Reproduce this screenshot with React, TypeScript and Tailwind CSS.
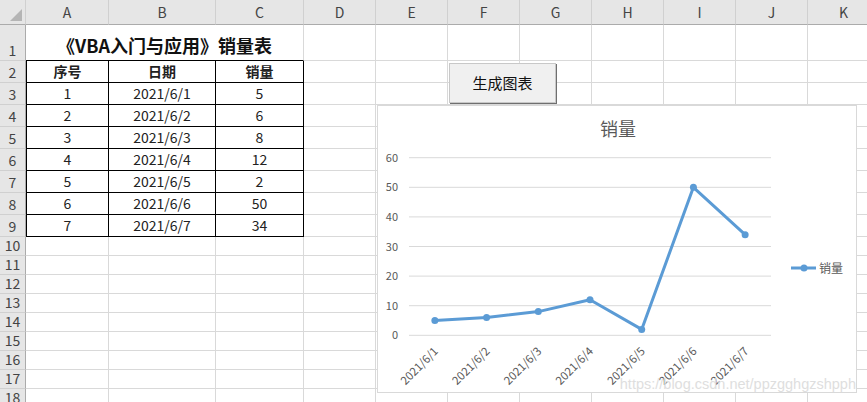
import React from 'react';

const COLS = [
  { key: 'A', w: 'w-[83px]' },
  { key: 'B', w: 'w-[107px]' },
  { key: 'C', w: 'w-[88px]' },
  { key: 'D', w: 'w-[72px]' },
  { key: 'E', w: 'w-[72px]' },
  { key: 'F', w: 'w-[72px]' },
  { key: 'G', w: 'w-[72px]' },
  { key: 'H', w: 'w-[72px]' },
  { key: 'I', w: 'w-[72px]' },
  { key: 'J', w: 'w-[72px]' },
  { key: 'K', w: 'w-[72px]' },
];

const DATA: [number, string, number][] = [
  [1, '2021/6/1', 5],
  [2, '2021/6/2', 6],
  [3, '2021/6/3', 8],
  [4, '2021/6/4', 12],
  [5, '2021/6/5', 2],
  [6, '2021/6/6', 50],
  [7, '2021/6/7', 34],
];

function RowHead({ n, h }: { n: number; h: string }) {
  return (
    <div
      className={`${h} w-[26px] shrink-0 flex items-end justify-center bg-[#e6e6e6] border-r border-b border-r-[#ababab] border-b-[#d0d0d0] text-[14px] leading-[19px] text-[#444]`}
    >
      {n}
    </div>
  );
}

function EmptyCells({ from, h }: { from: number; h: string }) {
  return (
    <>
      {COLS.slice(from).map((c) => (
        <div
          key={c.key}
          className={`${h} ${c.w} shrink-0 border-r border-b border-[#d9d9d9]`}
        />
      ))}
    </>
  );
}

function TableRow({ n, cells, bold }: { n: number; cells: (string | number)[]; bold?: boolean }) {
  return (
    <div className="flex">
      <RowHead n={n} h="h-[22px]" />
      {cells.map((v, i) => (
        <div
          key={i}
          className={`h-[22px] ${COLS[i].w} shrink-0 flex items-center justify-center border-r border-b border-black text-[14px] text-[#222] ${
            i === 0 ? 'border-l' : ''
          } ${bold ? 'font-bold' : ''}`}
        >
          {v}
        </div>
      ))}
      <EmptyCells from={3} h="h-[22px]" />
    </div>
  );
}

function Chart() {
  const left = 31;
  const right = 393;
  const zeroY = 229.3;
  const step = 29.6;
  const band = (right - left) / 7;
  const pts = DATA.map((d, i) => ({
    x: left + band / 2 + i * band,
    y: zeroY - (d[2] / 10) * step,
    label: d[1],
  }));
  const path = pts.map((p, i) => `${i ? 'L' : 'M'}${p.x.toFixed(1)} ${p.y.toFixed(1)}`).join(' ');

  return (
    <div className="absolute left-[377px] top-[105px] w-[480px] h-[288px] bg-white border border-[#d9d9d9]">
      <svg width="480" height="288" className="block">
        <text x="240" y="30" textAnchor="middle" fontSize="18" fill="#595959">
          销量
        </text>
        {[0, 1, 2, 3, 4, 5, 6].map((k) => {
          const y = zeroY - k * step;
          return (
            <g key={k}>
              <line x1={left} x2={right} y1={y} y2={y} stroke="#d9d9d9" strokeWidth="1" />
              <text x="20" y={y + 4} textAnchor="end" fontSize="11" fill="#595959">
                {k * 10}
              </text>
            </g>
          );
        })}
        <path d={path} fill="none" stroke="#5b9bd5" strokeWidth="3" strokeLinejoin="round" />
        {pts.map((p) => (
          <circle key={p.label} cx={p.x} cy={p.y} r="3.5" fill="#5b9bd5" />
        ))}
        {pts.map((p) => (
          <text
            key={'l' + p.label}
            x={p.x + 4}
            y={246}
            textAnchor="end"
            fontSize="11.5"
            fill="#595959"
            transform={`rotate(-45 ${p.x + 4} 246)`}
          >
            {p.label}
          </text>
        ))}
        <line x1="413" x2="438" y1="162" y2="162" stroke="#5b9bd5" strokeWidth="3" />
        <circle cx="426" cy="162" r="3.5" fill="#5b9bd5" />
        <text x="441" y="166.5" fontSize="12" fill="#595959">
          销量
        </text>
      </svg>
      <div className="absolute right-0 bottom-[1px] text-[14.5px] leading-none text-[#dedede] font-['Liberation_Sans',sans-serif]">
        https://blog.csdn.net/ppzgghgzshpph
      </div>
    </div>
  );
}

export default function App() {
  return (
    <div className="relative w-[867px] h-[402px] overflow-hidden bg-white font-['Noto_Sans_CJK_SC','Microsoft_YaHei',sans-serif]">
      {/* column headers */}
      <div className="flex">
        <div className="h-[25px] w-[26px] shrink-0 flex items-end justify-end p-[3px] bg-[#e6e6e6] border-r border-b border-r-[#d0d0d0] border-b-[#ababab]">
          <svg width="12" height="12" viewBox="0 0 12 12" className="block">
            <path d="M12 0 L12 12 L0 12 Z" fill="#b5b5b5" />
          </svg>
        </div>
        {COLS.map((c) => (
          <div
            key={c.key}
            className={`h-[25px] ${c.w} shrink-0 flex items-center justify-center bg-[#e6e6e6] border-r border-b border-r-[#d0d0d0] border-b-[#ababab] text-[14px] text-[#444]`}
          >
            {c.key}
          </div>
        ))}
      </div>

      {/* row 1: merged title */}
      <div className="flex">
        <RowHead n={1} h="h-[36px]" />
        <div className="h-[36px] w-[278px] shrink-0 flex items-center justify-center pt-[6px] border-r border-b border-r-[#d9d9d9] border-b-black text-[18px] font-bold text-[#111]">
          《VBA入门与应用》销量表
        </div>
        <EmptyCells from={3} h="h-[36px]" />
      </div>

      <TableRow n={2} cells={['序号', '日期', '销量']} bold />
      {DATA.map((d, i) => (
        <TableRow key={i} n={i + 3} cells={d} />
      ))}

      {[10, 11, 12, 13, 14, 15, 16, 17, 18].map((n) => (
        <div key={n} className="flex">
          <RowHead n={n} h="h-[19px]" />
          <EmptyCells from={0} h="h-[19px]" />
        </div>
      ))}

      <button className="absolute left-[449px] top-[63px] w-[107px] h-[40px] flex items-center justify-center bg-[#f0f0f0] border border-[#c8c8c8] shadow-[1px_1px_0_#6f6f6f] text-[15px] text-[#111]">
        生成图表
      </button>

      <Chart />
    </div>
  );
}
